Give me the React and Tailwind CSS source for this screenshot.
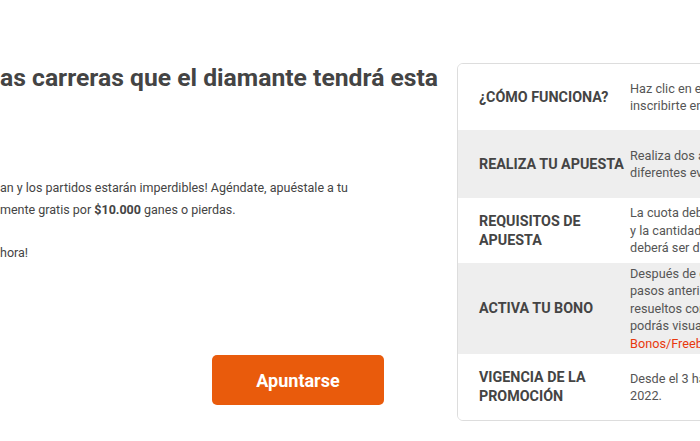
import React from "react";

const rows = [
  { label: ["¿CÓMO FUNCIONA?"], lines: ["Haz clic en el botón Apuntarse para", "inscribirte en la promoción."], h: "h-[66px]", bg: "bg-white" },
  { label: ["REALIZA TU APUESTA"], lines: ["Realiza dos apuestas combinadas en", "diferentes eventos de Fórmula 1."], h: "h-[68px]", bg: "bg-[#eeeeee]" },
  { label: ["REQUISITOS DE", "APUESTA"], lines: ["La cuota debe ser mínimo de 1.50", "y la cantidad mínima de apuesta", "deberá ser de $10.000."], h: "h-[65px]", bg: "bg-white" },
  { label: ["ACTIVA TU BONO"], lines: ["Después de completar todos los", "pasos anteriores y una vez estén", "resueltos con éxito tus apuestas,", "podrás visualizar tu bono en"], link: "Bonos/Freebets.", h: "h-[91px]", bg: "bg-[#eeeeee]" },
  { label: ["VIGENCIA DE LA", "PROMOCIÓN"], lines: ["Desde el 3 hasta el 31 de julio de", "2022."], h: "h-[66px]", bg: "bg-white" },
];

export default function App() {
  return (
    <div className="w-[700px] h-[441px] overflow-hidden bg-white font-['Roboto',sans-serif]">
      <div className="flex w-[900px]">
        <div className="w-[457px] shrink-0 flex flex-col text-[#444444]">
          <h1 className="mt-[63px] h-[30px] leading-[30px] text-[24.7px] font-bold whitespace-nowrap">
            as carreras que el diamante tendrá esta
          </h1>
          <p className="mt-[84px] text-[12.5px] leading-[22px] whitespace-nowrap">
            an y los partidos estarán imperdibles! Agéndate, apuéstale a tu
            <br />
            mente gratis por <b className="font-bold">$10.000</b> ganes o pierdas.
          </p>
          <p className="mt-[21px] text-[12.5px] leading-[22px] whitespace-nowrap">hora!</p>
          <div className="mt-[91px] ml-[212px]">
            <button className="w-[172px] h-[50px] rounded-[5px] bg-[#e95b0c] text-white text-[18px] font-bold">
              Apuntarse
            </button>
          </div>
        </div>
        <div className="mt-[63px] w-[400px] shrink-0 border border-[#dddddd] rounded-[6px] overflow-hidden">
          {rows.map((r, i) => (
            <div key={i} className={`flex items-center ${r.h} ${r.bg}`}>
              <div className="w-[172px] shrink-0 pl-[21px] text-[14.3px] leading-[19px] font-bold text-[#444444]">
                {r.label.map((l, j) => (
                  <div key={j} className="whitespace-nowrap">{l}</div>
                ))}
              </div>
              <div className="text-[12.7px] leading-[17.5px] text-[#555555]">
                {r.lines.map((l, j) => (
                  <div key={j} className="whitespace-nowrap">{l}</div>
                ))}
                {r.link && <div className="whitespace-nowrap text-[#e8380d]">{r.link}</div>}
              </div>
            </div>
          ))}
        </div>
      </div>
    </div>
  );
}
